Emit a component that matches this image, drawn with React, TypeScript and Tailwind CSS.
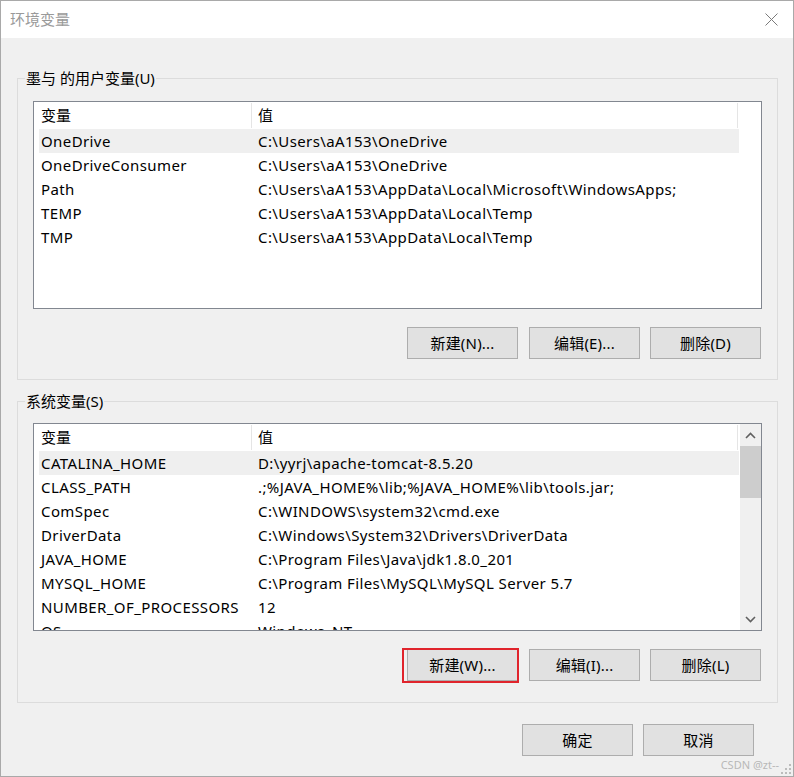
import React from "react";

const FONT = '"Noto Sans", "Noto Sans CJK SC", sans-serif';

type Row = [string, string];

const userRows: Row[] = [
  ["OneDrive", "C:\\Users\\aA153\\OneDrive"],
  ["OneDriveConsumer", "C:\\Users\\aA153\\OneDrive"],
  ["Path", "C:\\Users\\aA153\\AppData\\Local\\Microsoft\\WindowsApps;"],
  ["TEMP", "C:\\Users\\aA153\\AppData\\Local\\Temp"],
  ["TMP", "C:\\Users\\aA153\\AppData\\Local\\Temp"],
];

const sysRows: Row[] = [
  ["CATALINA_HOME", "D:\\yyrj\\apache-tomcat-8.5.20"],
  ["CLASS_PATH", ".;%JAVA_HOME%\\lib;%JAVA_HOME%\\lib\\tools.jar;"],
  ["ComSpec", "C:\\WINDOWS\\system32\\cmd.exe"],
  ["DriverData", "C:\\Windows\\System32\\Drivers\\DriverData"],
  ["JAVA_HOME", "C:\\Program Files\\Java\\jdk1.8.0_201"],
  ["MYSQL_HOME", "C:\\Program Files\\MySQL\\MySQL Server 5.7"],
  ["NUMBER_OF_PROCESSORS", "12"],
  ["OS", "Windows_NT"],
];

function Btn({ label, className = "" }: { label: string; className?: string }) {
  return (
    <div
      className={`w-[111px] h-[32px] flex items-center justify-center border border-[#adadad] bg-[#e1e1e1] text-[15px] tracking-[0.2px] text-black ${className}`}
    >
      {label}
    </div>
  );
}

function List({ rows, scroll }: { rows: Row[]; scroll?: boolean }) {
  return (
    <div className="h-[208px] border border-[#828790] bg-white flex overflow-hidden">
      <div className="flex-1 flex flex-col pl-[5px] overflow-hidden">
        <div className="h-[27px] shrink-0 flex text-[15px] text-black">
          <div className="w-[213px] shrink-0 flex items-center pl-[2px] border-r border-[#e5e5e5] my-[1px]">变量</div>
          <div className="w-[486px] shrink-0 flex items-center pl-[6px] border-r border-[#e5e5e5] my-[1px]">值</div>
        </div>
        {rows.map((r, i) => (
          <div
            key={r[0]}
            className={`h-[24px] shrink-0 w-[700px] flex items-center text-[15px] tracking-[0.4px] text-black whitespace-nowrap ${
              i === 0 ? "bg-[#efefef]" : ""
            }`}
          >
            <div className="w-[213px] shrink-0 pl-[2px]">{r[0]}</div>
            <div className="pl-[6px]">{r[1]}</div>
          </div>
        ))}
      </div>
      {scroll && (
        <div className="w-[21px] shrink-0 bg-[#f0f0f0] flex flex-col">
          <div className="h-[22px] flex items-center justify-center">
            <svg width="11" height="7" viewBox="0 0 11 7">
              <path d="M1 6 L5.5 1.5 L10 6" fill="none" stroke="#606060" strokeWidth="1.6" />
            </svg>
          </div>
          <div className="h-[52px] bg-[#cdcdcd]" />
          <div className="flex-1" />
          <div className="h-[22px] flex items-center justify-center">
            <svg width="11" height="7" viewBox="0 0 11 7">
              <path d="M1 1 L5.5 5.5 L10 1" fill="none" stroke="#606060" strokeWidth="1.6" />
            </svg>
          </div>
        </div>
      )}
    </div>
  );
}

function Group({
  label,
  children,
  pt,
  pb,
  className = "",
}: {
  label: string;
  children: React.ReactNode;
  pt: string;
  pb: string;
  className?: string;
}) {
  return (
    <div className={`relative w-[761px] h-[302px] border border-[#dcdcdc] px-[15px] ${pt} ${pb} ${className}`}>
      <div className="absolute left-[7px] top-[-11px] px-[1px] bg-[#f0f0f0] text-[15px] leading-[20px] text-black">
        {label}
      </div>
      {children}
    </div>
  );
}

export default function App() {
  return (
    <div
      className="w-[794px] h-[777px] border border-[#a9a9a9] bg-[#f0f0f0] flex flex-col relative"
      style={{ fontFamily: FONT }}
    >
      <div className="h-[37px] shrink-0 bg-white flex items-center justify-between pl-[9px] pr-[15px]">
        <span className="text-[15px] text-[#9a9a9a]">环境变量</span>
        <svg width="13" height="13" viewBox="0 0 13 13">
          <path d="M0.5 0.5 L12.5 12.5 M12.5 0.5 L0.5 12.5" stroke="#7a7a7a" strokeWidth="1" />
        </svg>
      </div>
      <div className="flex flex-col px-[16px] pt-[40px]">
        <Group label="墨与 的用户变量(U)" pt="pt-[22px]" pb="pb-[20px]">
          <List rows={userRows} />
          <div className="mt-[18px] flex justify-end pr-[1px]">
            <Btn label="新建(N)..." />
            <Btn label="编辑(E)..." className="ml-[11px]" />
            <Btn label="删除(D)" className="ml-[10px]" />
          </div>
        </Group>
        <Group label="系统变量(S)" pt="pt-[21px]" pb="pb-[21px]" className="mt-[21px]">
          <List rows={sysRows} scroll />
          <div className="mt-[18px] flex justify-end pr-[1px]">
            <div className="relative">
              <Btn label="新建(W)..." />
              <div className="absolute left-[-5px] top-[-1px] w-[117px] h-[35px] border-2 border-[#e0242c]" />
            </div>
            <Btn label="编辑(I)..." className="ml-[11px]" />
            <Btn label="删除(L)" className="ml-[10px]" />
          </div>
        </Group>
        <div className="mt-[21px] flex justify-end pr-[23px]">
          <Btn label="确定" />
          <Btn label="取消" className="ml-[10px]" />
        </div>
      </div>
      <div className="absolute right-[14px] bottom-[5px] text-[11px] leading-[12px] text-[#b8b8b8]">CSDN @zt--</div>
      <svg className="absolute right-[1px] bottom-[1px]" width="12" height="12" viewBox="0 0 12 12">
        <rect x="9" y="1" width="2" height="2" fill="#bcbcbc" />
        <rect x="5" y="5" width="2" height="2" fill="#bcbcbc" />
        <rect x="9" y="5" width="2" height="2" fill="#bcbcbc" />
        <rect x="1" y="9" width="2" height="2" fill="#bcbcbc" />
        <rect x="5" y="9" width="2" height="2" fill="#bcbcbc" />
        <rect x="9" y="9" width="2" height="2" fill="#bcbcbc" />
      </svg>
    </div>
  );
}
